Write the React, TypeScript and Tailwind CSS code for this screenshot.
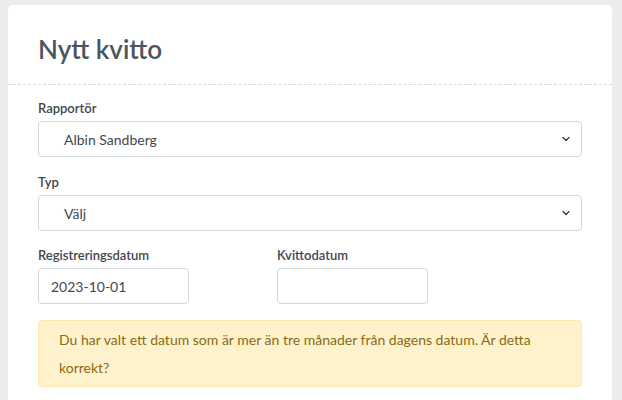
import { ChevronDown } from 'lucide-react';

function Label({ children }: { children: React.ReactNode }) {
  return (
    <label className="block text-[13px] font-semibold text-[#3f4750] leading-4 mb-[5px]">
      {children}
    </label>
  );
}

function SelectBox({ value }: { value: string }) {
  return (
    <div className="h-9 w-full rounded border border-[#d3d6db] bg-white flex items-center justify-between pl-[25px] pr-[9px]">
      <span className="text-[14px] text-[#3f4750]">{value}</span>
      <ChevronDown className="w-3 h-3 text-[#2b3a4a]" strokeWidth={2.5} />
    </div>
  );
}

export default function App() {
  return (
    <div
      className="min-h-[400px] bg-[#ebecee] pl-2 pr-[10px] pt-[5px]"
      style={{ fontFamily: 'Lato, "Open Sans", sans-serif' }}
    >
      <div className="bg-white rounded-t-[5px] h-[395px]">
        <div className="h-[80px] border-b border-dashed border-[#d6d8dc] px-[30px] pt-[28px]">
          <h1 className="text-[26px] font-semibold text-[#4b5560] leading-8">Nytt kvitto</h1>
        </div>
        <div className="px-[30px] pt-[15px]">
          <Label>Rapportör</Label>
          <SelectBox value="Albin Sandberg" />

          <div className="mt-[17px]">
            <Label>Typ</Label>
            <SelectBox value="Välj" />
          </div>

          <div className="mt-4 flex gap-[88px]">
            <div>
              <Label>Registreringsdatum</Label>
              <div className="w-[151px] h-9 rounded border border-[#d3d6db] flex items-center px-3 text-[14px] text-[#3f4750]">
                2023-10-01
              </div>
            </div>
            <div>
              <Label>Kvittodatum</Label>
              <div className="w-[151px] h-9 rounded border border-[#d3d6db]" />
            </div>
          </div>

          <div className="mt-4 h-[67px] rounded border border-[#fde9b0] bg-[#fef2cc] px-5 pt-[5px] text-[14px] leading-[28px] text-[#8a6a16]">
            Du har valt ett datum som är mer än tre månader från dagens datum. Är detta korrekt?
          </div>
        </div>
      </div>
    </div>
  );
}
